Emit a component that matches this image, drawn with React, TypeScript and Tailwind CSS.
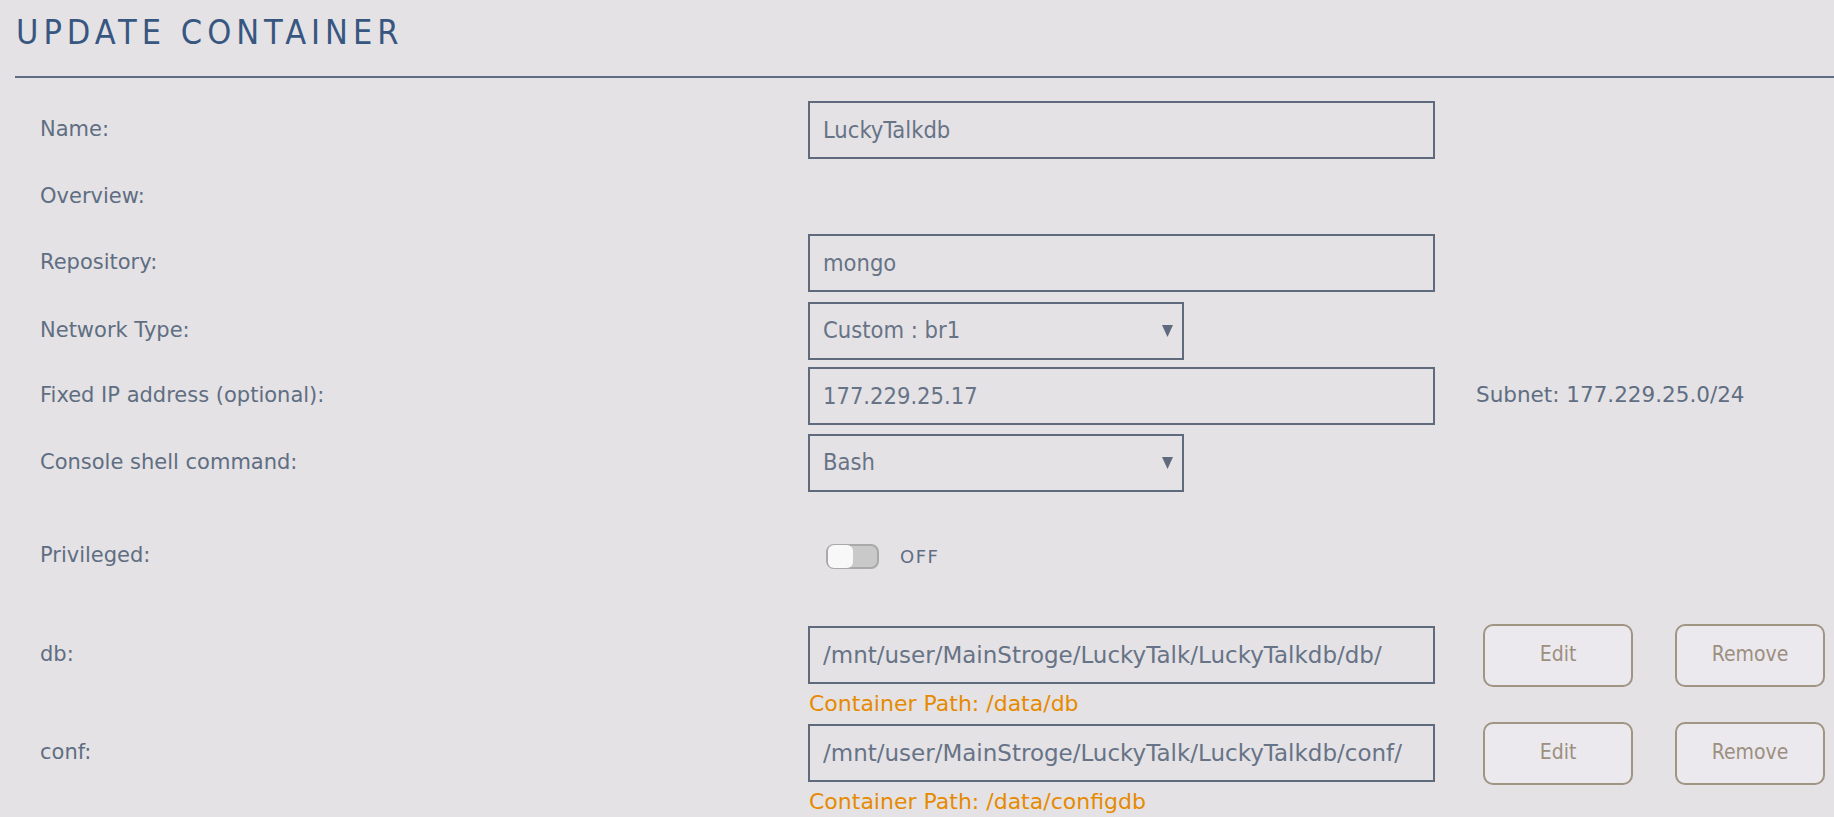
import React from 'react';

const sans = "font-['DejaVu_Sans',sans-serif]";
const cond = "font-['DejaVu_Sans_Condensed','DejaVu_Sans',sans-serif] font-stretch-condensed";

const Label = ({ children }: { children: React.ReactNode }) => (
  <div className={`w-[793px] shrink-0 pl-[25px] text-[21px] text-[#5f6e82] ${sans}`}>{children}</div>
);

const TextBox = ({ value, wide = true, mono = false }: { value: string; wide?: boolean; mono?: boolean }) => (
  <input
    readOnly
    value={value}
    className={`h-[58px] ${wide ? 'w-[627px]' : 'w-[376px]'} border-2 border-[#5f6a7c] bg-transparent pl-[13px] text-[#677386] outline-none ${
      mono ? `${sans} text-[23px]` : `${cond} text-[23.5px]`
    }`}
  />
);

const SelectBox = ({ value }: { value: string }) => (
  <div className={`flex h-[58px] w-[376px] items-center justify-between border-2 border-[#5f6a7c] pl-[13px] pr-[9px] text-[23.5px] text-[#677386] ${cond}`}>
    <span>{value}</span>
    <svg width="11" height="12" viewBox="0 0 11 12">
      <path d="M0 0 H11 L5.5 12 Z" fill="#5f6a7c" />
    </svg>
  </div>
);

const Btn = ({ children }: { children: React.ReactNode }) => (
  <button className={`flex h-[63px] w-[150px] items-center justify-center rounded-[10px] border-2 border-[#a09483] bg-[#ebe9ee] text-[21px] text-[#9c8f7f] ${cond}`}>
    {children}
  </button>
);

const PathRow = ({ label, host, container }: { label: string; host: string; container: string }) => (
  <>
    <div className="flex h-[58px] items-center">
      <Label>{label}</Label>
      <TextBox value={host} mono />
      <div className="ml-[48px] flex gap-[42px]">
        <Btn>Edit</Btn>
        <Btn>Remove</Btn>
      </div>
    </div>
    <div className="flex h-[38px] items-center">
      <div className="w-[793px] shrink-0" />
      <span className={`pl-[1px] text-[22px] text-[#e68a00] ${sans}`}>Container Path: {container}</span>
    </div>
  </>
);

export default function App() {
  return (
    <div className="h-[817px] w-full overflow-hidden bg-[#e4e2e5] pl-[15px]">
      <div className="h-[78px] border-b-2 border-[#5f6e84] pt-[15px]">
        <h1 className={`ml-[1px] text-[34px] leading-none tracking-[5px] text-[#375781] ${cond}`}>UPDATE CONTAINER</h1>
      </div>

      <div className="mt-[23px] flex h-[58px] items-center">
        <Label>Name:</Label>
        <TextBox value="LuckyTalkdb" />
      </div>

      <div className="flex h-[75px] items-center">
        <Label>Overview:</Label>
      </div>

      <div className="flex h-[58px] items-center">
        <Label>Repository:</Label>
        <TextBox value="mongo" />
      </div>

      <div className="mt-[10px] flex h-[58px] items-center">
        <Label>Network Type:</Label>
        <SelectBox value="Custom : br1" />
      </div>

      <div className="mt-[6px] flex h-[59px] items-center">
        <Label>Fixed IP address (optional):</Label>
        <TextBox value="177.229.25.17" />
        <span className={`ml-[41px] text-[21.5px] text-[#5f6e82] ${sans}`}>Subnet: 177.229.25.0/24</span>
      </div>

      <div className="mt-[9px] flex h-[58px] items-center">
        <Label>Console shell command:</Label>
        <SelectBox value="Bash" />
      </div>

      <div className="flex h-[128px] items-center">
        <Label>Privileged:</Label>
        <div className="ml-[18px] flex items-center">
          <div className="flex h-[25px] w-[53px] items-center rounded-[8px] border-2 border-[#a9a9a9] bg-[#c9c9c9]">
            <div className="h-[23px] w-[25px] rounded-[6px] bg-[#f8f8f8]" />
          </div>
          <span className={`ml-[21px] text-[18px] tracking-[1.5px] text-[#5f6e82] ${sans}`}>OFF</span>
        </div>
      </div>

      <div className="mt-[6px]">
        <PathRow label="db:" host="/mnt/user/MainStroge/LuckyTalk/LuckyTalkdb/db/" container="/data/db" />
      </div>
      <div className="mt-[2px]">
        <PathRow label="conf:" host="/mnt/user/MainStroge/LuckyTalk/LuckyTalkdb/conf/" container="/data/configdb" />
      </div>
    </div>
  );
}
